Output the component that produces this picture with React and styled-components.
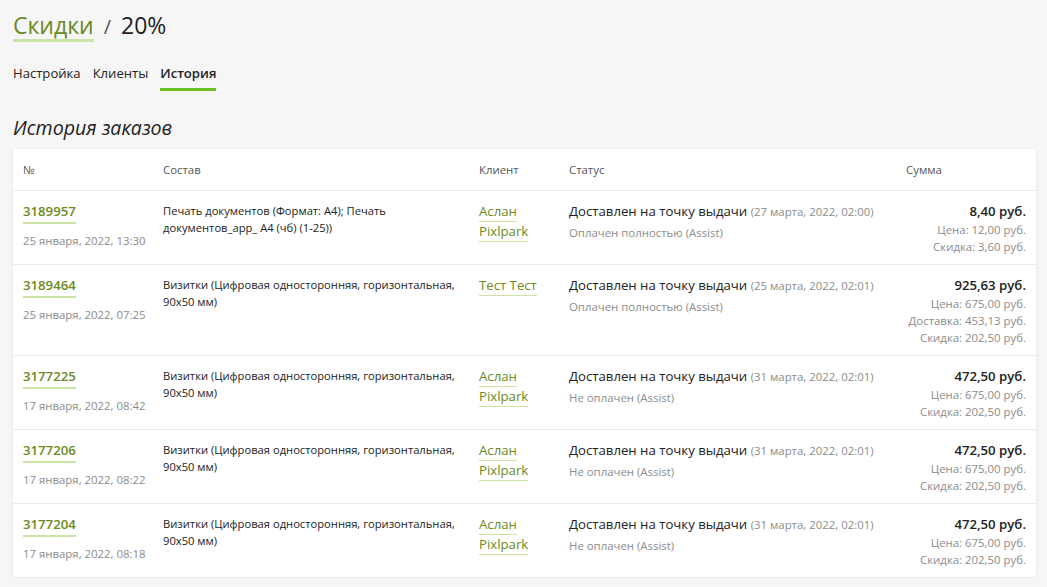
import styled, { createGlobalStyle } from "styled-components";

const GlobalStyle = createGlobalStyle`
  body {
    margin: 0;
    background: #f6f6f6;
    font-family: "Open Sans", "Noto Sans", sans-serif;
    color: #222;
  }
`;

const Page = styled.div`
  padding: 9px 11px 0 13px;
`;

const Heading = styled.h1`
  margin: 0;
  font-size: 23px;
  font-weight: 400;
  display: flex;
  align-items: baseline;
  gap: 10px;
  line-height: 32px;
`;

const Crumb = styled.a`
  color: #6a8a22;
  text-decoration: none;
  border-bottom: 3px solid #cbe3a5;
  line-height: 28px;
`;

const Slash = styled.span`
  color: #555;
  font-size: 20px;
`;

const Tabs = styled.nav`
  display: flex;
  gap: 12px;
  margin-top: 21px;
`;

const Tab = styled.a`
  font-size: 13.1px;
  color: #222;
  font-weight: ${(p) => (p.$active ? 600 : 400)};
  padding-bottom: 6px;
  border-bottom: 3px solid ${(p) => (p.$active ? "#6cc024" : "transparent")};
  line-height: 18px;
`;

const SectionTitle = styled.h2`
  margin: 24px 0 8px;
  font-size: 19.6px;
  font-weight: 400;
  font-style: italic;
  line-height: 26px;
`;

const Card = styled.div`
  background: #fff;
  border-radius: 4px;
  box-shadow: 0 1px 3px rgba(0, 0, 0, 0.1);
  overflow: hidden;
`;

const Table = styled.table`
  width: 100%;
  border-collapse: collapse;
  table-layout: fixed;
`;

const Th = styled.th`
  text-align: left;
  font-size: 11.4px;
  font-weight: 400;
  color: #555;
  height: 41px;
  padding: 0 10px;
  border-bottom: 1px solid #ebebeb;
`;

const Td = styled.td`
  vertical-align: top;
  padding: 10px ${(p) => p.$pr || 10}px 9px 10px;
  border-bottom: 1px solid #ebebeb;
  text-align: ${(p) => (p.$right ? "right" : "left")};
`;

const OrderLink = styled.a`
  display: block;
  width: fit-content;
  font-size: 13.2px;
  font-weight: 600;
  color: #6a8a22;
  line-height: 21px;
  border-bottom: 2px solid #cbe3a5;
`;

const Muted = styled.div`
  font-size: 11.4px;
  color: #8c8c8c;
  line-height: 17px;
  white-space: nowrap;
  margin-top: ${(p) => p.$mt || 0}px;
`;

const Items = styled.div`
  font-size: 11.2px;
  line-height: 17px;
  color: #222;
  padding-top: 1px;
`;

const Client = styled.div`
  display: flex;
  flex-wrap: wrap;
  column-gap: 4px;
  margin-top: 1px;
`;

const ClientName = styled.a`
  font-size: 13.2px;
  color: #6a8a22;
  line-height: 19px;
  border-bottom: 1px solid #cbe3a5;
`;

const Status = styled.div`
  font-size: 13.2px;
  line-height: 20px;
  color: #222;
`;

const StatusDate = styled.span`
  font-size: 11.4px;
  color: #8c8c8c;
`;

const Total = styled.div`
  font-size: 13.2px;
  font-weight: 600;
  line-height: 20px;
`;

const orders = [
  {
    id: "3189957",
    date: "25 января, 2022, 13:30",
    items: "Печать документов (Формат: А4); Печать документов_app_ А4 (чб) (1-25))",
    client: ["Аслан", "Pixlpark"],
    statusDate: "(27 марта, 2022, 02:00)",
    payment: "Оплачен полностью (Assist)",
    total: "8,40 руб.",
    lines: ["Цена: 12,00 руб.", "Скидка: 3,60 руб."],
  },
  {
    id: "3189464",
    date: "25 января, 2022, 07:25",
    items: "Визитки (Цифровая односторонняя, горизонтальная, 90x50 мм)",
    client: ["Тест Тест"],
    statusDate: "(25 марта, 2022, 02:01)",
    payment: "Оплачен полностью (Assist)",
    total: "925,63 руб.",
    lines: ["Цена: 675,00 руб.", "Доставка: 453,13 руб.", "Скидка: 202,50 руб."],
  },
  {
    id: "3177225",
    date: "17 января, 2022, 08:42",
    items: "Визитки (Цифровая односторонняя, горизонтальная, 90x50 мм)",
    client: ["Аслан", "Pixlpark"],
    statusDate: "(31 марта, 2022, 02:01)",
    payment: "Не оплачен (Assist)",
    total: "472,50 руб.",
    lines: ["Цена: 675,00 руб.", "Скидка: 202,50 руб."],
  },
  {
    id: "3177206",
    date: "17 января, 2022, 08:22",
    items: "Визитки (Цифровая односторонняя, горизонтальная, 90x50 мм)",
    client: ["Аслан", "Pixlpark"],
    statusDate: "(31 марта, 2022, 02:01)",
    payment: "Не оплачен (Assist)",
    total: "472,50 руб.",
    lines: ["Цена: 675,00 руб.", "Скидка: 202,50 руб."],
  },
  {
    id: "3177204",
    date: "17 января, 2022, 08:18",
    items: "Визитки (Цифровая односторонняя, горизонтальная, 90x50 мм)",
    client: ["Аслан", "Pixlpark"],
    statusDate: "(31 марта, 2022, 02:01)",
    payment: "Не оплачен (Assist)",
    total: "472,50 руб.",
    lines: ["Цена: 675,00 руб.", "Скидка: 202,50 руб."],
  },
];

const App = () => {
  return (
    <Page>
      <GlobalStyle />
      <Heading>
        <Crumb>Скидки</Crumb>
        <Slash>/</Slash>
        <span>20%</span>
      </Heading>
      <Tabs>
        <Tab>Настройка</Tab>
        <Tab>Клиенты</Tab>
        <Tab $active>История</Tab>
      </Tabs>
      <SectionTitle>История заказов</SectionTitle>
      <Card>
        <Table>
          <colgroup>
            <col style={{ width: 140 }} />
            <col style={{ width: 316 }} />
            <col style={{ width: 90 }} />
            <col style={{ width: 337 }} />
            <col />
          </colgroup>
          <thead>
            <tr>
              <Th>№</Th>
              <Th>Состав</Th>
              <Th>Клиент</Th>
              <Th>Статус</Th>
              <Th>Сумма</Th>
            </tr>
          </thead>
          <tbody>
            {orders.map((o) => (
              <tr key={o.id}>
                <Td>
                  <OrderLink>{o.id}</OrderLink>
                  <Muted $mt={8}>{o.date}</Muted>
                </Td>
                <Td $pr={6}>
                  <Items>{o.items}</Items>
                </Td>
                <Td>
                  <Client>
                    {o.client.map((c) => (
                      <ClientName key={c}>{c}</ClientName>
                    ))}
                  </Client>
                </Td>
                <Td>
                  <Status>
                    Доставлен на точку выдачи <StatusDate>{o.statusDate}</StatusDate>
                  </Status>
                  <Muted $mt={2}>{o.payment}</Muted>
                </Td>
                <Td $right>
                  <Total>{o.total}</Total>
                  {o.lines.map((l) => (
                    <Muted key={l}>{l}</Muted>
                  ))}
                </Td>
              </tr>
            ))}
          </tbody>
        </Table>
      </Card>
    </Page>
  );
};

export default App;
